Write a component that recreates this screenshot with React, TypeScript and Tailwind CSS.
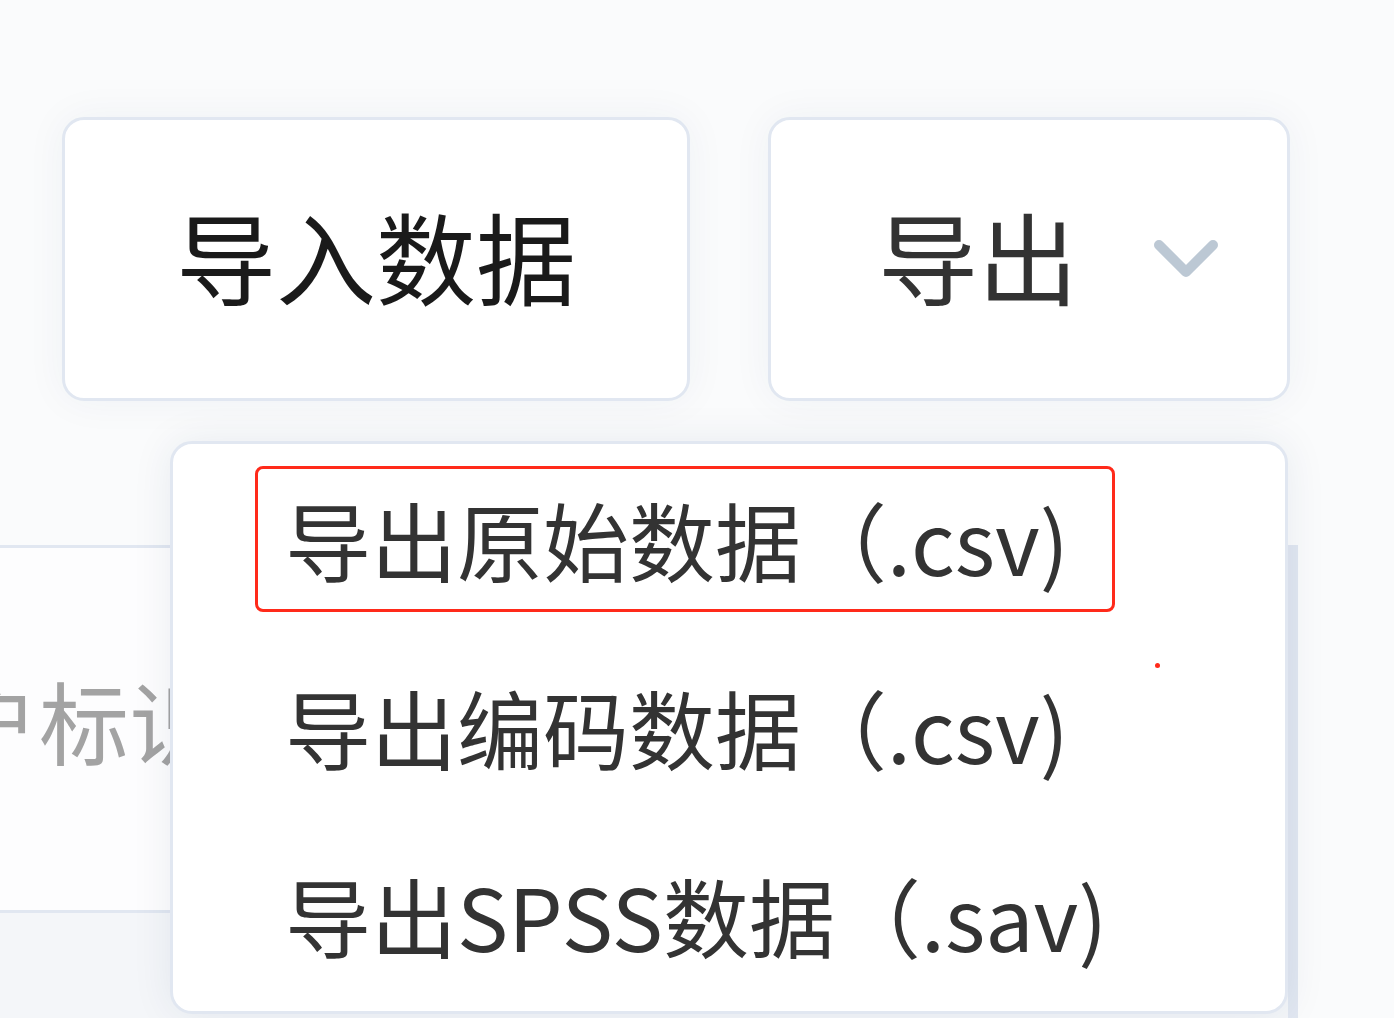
export default function App() {
  const items = ["导出原始数据（.csv)", "导出编码数据（.csv)", "导出SPSS数据（.sav)"];

  return (
    <div className="relative h-[1018px] w-[1394px] overflow-hidden bg-[#fafbfc] font-['Noto_Sans_CJK_SC',sans-serif]">
      {/* action buttons */}
      <div className="flex gap-[78px] pl-[62px] pt-[117px]">
        <button className="flex h-[284px] w-[628px] items-center justify-center rounded-[22px] border-[3px] border-[#e1e7f1] bg-white pb-[8px] text-[100px] leading-none text-[#1a1a1a] shadow-[0_0_40px_rgba(30,50,90,0.05)]">
          导入数据
        </button>
        <button className="flex h-[284px] w-[522px] items-center rounded-[22px] border-[3px] border-[#e1e7f1] bg-white pl-[107px] text-[100px] leading-none text-[#333333] shadow-[0_0_40px_rgba(30,50,90,0.05)]">
          <span className="pb-[8px]">导出</span>
          <svg className="ml-[75px] h-[40px] w-[66px]" viewBox="0 0 66 40" fill="none">
            <path d="M6 6 L33 33 L60 6" stroke="#bcc8d4" strokeWidth="10" strokeLinecap="round" strokeLinejoin="round" />
          </svg>
        </button>
      </div>

      {/* table behind */}
      <div className="ml-[-200px] mt-[144px] w-[1498px] border-[3px] border-r-[10px] border-[#e1e7f1] bg-[#f4f6f9]">
        <div className="flex h-[365px] items-center border-b-[3px] border-[#e1e7f1] bg-[#fdfdfe] pb-[20px] pl-[56px] text-[90px] leading-none text-[#a3a3a3]">
          用户标识
        </div>
        <div className="h-[200px]" />
      </div>

      {/* dropdown menu */}
      <div className="absolute left-[170px] top-[441px] h-[573px] w-[1118px] rounded-[22px] border-[3px] border-[#e1e7f1] bg-white pl-[82px] pt-[22px] shadow-[0_0_40px_rgba(30,50,90,0.08)]">
        <div className="flex flex-col gap-[42px]">
          {items.map((t, i) => (
            <div
              key={t}
              className={
                i === 0
                  ? "flex h-[146px] w-[860px] items-center rounded-[8px] border-[3px] border-[#ff2a1a] pl-[27px] text-[86px] leading-none text-[#333333]"
                  : "flex h-[146px] w-[860px] items-center rounded-[8px] border-[3px] border-transparent pl-[27px] text-[86px] leading-none text-[#333333]"
              }
            >
              {t}
            </div>
          ))}
        </div>
      </div>

      <div className="absolute left-[1155px] top-[663px] h-[5px] w-[5px] rounded-full bg-[#ff2a1a]" />
    </div>
  );
}
